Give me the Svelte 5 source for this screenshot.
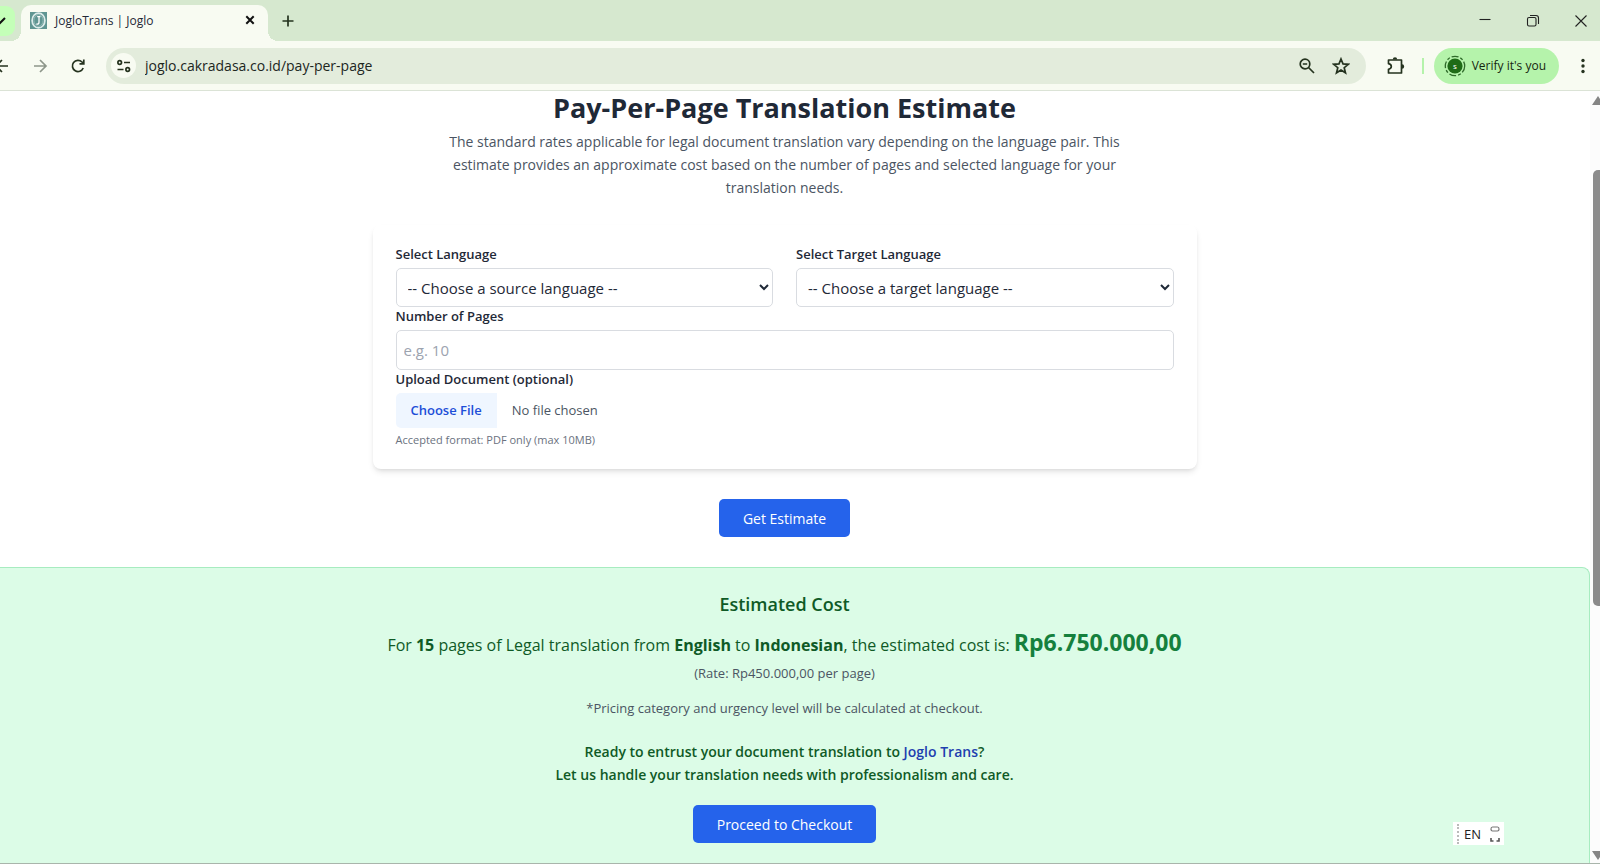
<script>
  const sourceLanguages = ["English", "Indonesian", "Dutch", "Japanese"]
  const targetLanguages = ["Indonesian", "English", "Dutch", "Japanese"]

  let url = "joglo.cakradasa.co.id/pay-per-page"
  let source = ""
  let target = ""
  let pages = ""

  const estimate = {
    pages: 15,
    from: "English",
    to: "Indonesian",
    total: "Rp6.750.000,00",
    rate: "Rp450.000,00",
  }
</script>

<div class="window">
  <header class="tabs">
    <button class="tab_search" aria-label="Search tabs">
      <svg width="20" height="20" viewBox="0 0 20 20">
        <path d="M0 9l4 4 5-5" transform="translate(-4 -1)" />
      </svg>
    </button>
    <div class="tab">
      <svg class="favicon" width="17" height="17" viewBox="0 0 17 17">
        <rect width="17" height="17" fill="#5f9592" />
        <ellipse cx="8.5" cy="8.5" rx="6.4" ry="7.4" fill="none" stroke="#dcebea" />
        <ellipse cx="8.5" cy="8.5" rx="4.6" ry="5.8" fill="none" stroke="#a9c9c6" stroke-width=".7" />
        <path d="M7.2 4.6h3.2M9 4.6v5.6q0 2-2 2l-.6-.5" fill="none" stroke="#fff" stroke-width="1.3" />
      </svg>
      <span class="tab_title">JogloTrans | Joglo</span>
      <button class="icon" aria-label="Close tab">
        <svg width="16" height="16" viewBox="0 0 16 16" class="bold">
          <path d="M4.3 4.3l7.4 7.4M11.7 4.3l-7.4 7.4" />
        </svg>
      </button>
    </div>
    <button class="icon new_tab" aria-label="New tab">
      <svg width="16" height="16" viewBox="0 0 16 16">
        <path d="M8 2.5v11M2.5 8h11" />
      </svg>
    </button>
    <div class="controls">
      <button class="icon" aria-label="Minimize">
        <svg width="16" height="16" viewBox="0 0 16 16" class="thin"><path d="M2.5 6.5h11" /></svg>
      </button>
      <button class="icon" aria-label="Restore">
        <svg width="16" height="16" viewBox="0 0 16 16" class="thin">
          <rect x="2.5" y="4.5" width="8.5" height="8.5" rx="1.5" />
          <path d="M5 2.5h6a2.5 2.5 0 0 1 2.5 2.5v6" />
        </svg>
      </button>
      <button class="icon" aria-label="Close window">
        <svg width="16" height="16" viewBox="0 0 16 16" class="thin"><path d="M2.5 2.5l11 11M13.5 2.5l-11 11" /></svg>
      </button>
    </div>
  </header>

  <div class="toolbar">
    <button class="icon back" aria-label="Back">
      <svg width="16" height="16" viewBox="0 0 16 16"><path d="M14 8H2M8 2L2 8l6 6" /></svg>
    </button>
    <button class="icon forward" aria-label="Forward">
      <svg width="16" height="16" viewBox="0 0 16 16"><path d="M2 8h12M8 2l6 6-6 6" /></svg>
    </button>
    <button class="icon reload" aria-label="Reload">
      <svg width="16" height="16" viewBox="0 0 16 16">
        <path d="M13.2 10A5.6 5.6 0 1 1 12 4l1.5 1.5M13.8 1.5v4.3H9.5" />
      </svg>
    </button>
    <div class="omnibox">
      <button class="site_info" aria-label="View site information">
        <svg width="16" height="16" viewBox="0 0 16 16">
          <circle cx="3.7" cy="4.5" r="1.8" />
          <path d="M8 4.5h6M1.5 11.5h6" />
          <circle cx="11.7" cy="11.5" r="1.8" />
        </svg>
      </button>
      <input class="url" type="text" aria-label="Address bar" bind:value={url} />
      <button class="icon" aria-label="Zoom">
        <svg width="18" height="18" viewBox="0 0 18 18">
          <circle cx="7" cy="7" r="4.8" />
          <path d="M10.5 10.5l5.5 5.5M4.8 7h4.4" />
        </svg>
      </button>
      <button class="icon" aria-label="Bookmark this tab">
        <svg width="18" height="18" viewBox="0 0 18 18">
          <path d="M9 2l2 4.9 5.2.4-4 3.4 1.3 5.1L9 13l-4.5 2.8 1.3-5.1-4-3.4L7 6.9z" />
        </svg>
      </button>
    </div>
    <button class="icon extensions" aria-label="Extensions">
      <svg width="20" height="20" viewBox="0 0 20 20">
        <path d="M2.5 4h13v13h-13v-3.7q2.8-.6 2.8-2.8t-2.8-2.8z" stroke-linejoin="round" />
        <path class="fill" d="M6.8 3.5a2.2 2.2 0 0 1 4.4 0zM16 8.3a2.2 2.2 0 0 1 0 4.4z" />
      </svg>
    </button>
    <span class="divider"></span>
    <button class="verify">
      <svg width="22" height="22" viewBox="0 0 22 22">
        <circle cx="11" cy="11" r="7.6" fill="#1f6b17" />
        <circle cx="11" cy="11" r="9.7" fill="none" stroke="#2f6a2a" stroke-width="1.3" stroke-dasharray="7 2 3 2" />
        <text x="11" y="14" text-anchor="middle">s</text>
      </svg>
      <span>Verify it's you</span>
    </button>
    <button class="icon menu" aria-label="Browser menu">
      <svg width="16" height="16" viewBox="0 0 16 16" class="fill">
        <circle cx="8" cy="2.5" r="1.7" /><circle cx="8" cy="8" r="1.7" /><circle cx="8" cy="13.5" r="1.7" />
      </svg>
    </button>
  </div>

  <div class="viewport">
    <main>
      <h1>Pay-Per-Page Translation Estimate</h1>
      <p class="intro">
        The standard rates applicable for legal document translation vary depending on the language pair. This
        estimate provides an approximate cost based on the number of pages and selected language for your
        translation needs.
      </p>

      <form id="estimate" class="card" on:submit|preventDefault>
        <div class="pair">
          <div class="field">
            <label for="source">Select Language</label>
            <select id="source" bind:value={source}>
              <option value="">-- Choose a source language --</option>
              {#each sourceLanguages as name}
                <option value={name}>{name}</option>
              {/each}
            </select>
          </div>
          <div class="field">
            <label for="target">Select Target Language</label>
            <select id="target" bind:value={target}>
              <option value="">-- Choose a target language --</option>
              {#each targetLanguages as name}
                <option value={name}>{name}</option>
              {/each}
            </select>
          </div>
        </div>
        <div class="field">
          <label for="pages">Number of Pages</label>
          <input id="pages" type="number" min="1" placeholder="e.g. 10" bind:value={pages} />
        </div>
        <div class="field">
          <label for="document">Upload Document (optional)</label>
          <input id="document" type="file" accept="application/pdf" />
          <small>Accepted format: PDF only (max 10MB)</small>
        </div>
      </form>

      <button class="primary" type="submit" form="estimate">Get Estimate</button>

      <section class="result">
        <h2>Estimated Cost</h2>
        <p class="summary">
          For <strong>{estimate.pages}</strong> pages of Legal translation from
          <strong>{estimate.from}</strong> to <strong>{estimate.to}</strong>, the estimated cost is:
          <span class="total">{estimate.total}</span>
        </p>
        <p class="rate">(Rate: {estimate.rate} per page)</p>
        <p class="note">*Pricing category and urgency level will be calculated at checkout.</p>
        <p class="pitch">
          Ready to entrust your document translation to <span class="brand">Joglo Trans</span>?<br />
          Let us handle your translation needs with professionalism and care.
        </p>
        <button class="primary" type="button">Proceed to Checkout</button>
      </section>
    </main>

    <div class="scrollbar">
      <span class="arrow up"></span>
      <span class="track"><span class="thumb"></span></span>
      <span class="arrow down"></span>
    </div>

    <div class="language_bar">
      <span class="grip"></span>
      <span>EN</span>
      <svg width="10" height="18" viewBox="0 0 10 18">
        <path d="M3.5 2h-1Q1 2 1 4t1.500 2h1M6.500 2h1Q9 2 9 4T7.500 6h-1M3 2h4M3 6h4" fill="none" stroke="#777" stroke-width="1.2" />
        <path d="M1 13v3h2.500M9 13v3H6.500" fill="none" stroke="#555" stroke-width="1.6" />
      </svg>
    </div>
  </div>
</div>

<style>
  :global(body) {
    margin: 0;
    background: #fff;
  }
  .window {
    display: flex;
    flex-direction: column;
    height: 100vh;
    overflow: hidden;
    font-family: "Segoe UI", "Open Sans", sans-serif;
    color: #1f2937;
  }
  button,
  input,
  select {
    font: inherit;
    color: inherit;
  }
  button {
    border: 0;
    padding: 0;
    background: none;
    cursor: pointer;
  }
  svg {
    display: block;
    fill: none;
    stroke: #25331f;
    stroke-width: 1.7;
    flex: none;
  }
  svg.bold {
    stroke: #111;
    stroke-width: 2;
  }
  svg.thin {
    stroke: #222;
    stroke-width: 1.1;
  }
  svg.fill,
  .fill {
    fill: #25331f;
    stroke: none;
  }

  /* tab strip */
  .tabs {
    display: flex;
    align-items: center;
    height: 41px;
    background: #d6e8cf;
  }
  .tab_search {
    width: 15px;
    height: 30px;
    border-radius: 0 9px 9px 0;
    background: #c4ffb8;
    overflow: hidden;
  }
  .tab_search svg {
    stroke: #111;
    stroke-width: 2;
  }
  .tab {
    position: relative;
    display: flex;
    align-items: center;
    align-self: flex-end;
    box-sizing: border-box;
    width: 247px;
    height: 36px;
    margin-left: 6px;
    padding: 0 10px 6px 9px;
    border-radius: 10px 10px 0 0;
    background: #f8fbf2;
  }
  .tab::before,
  .tab::after {
    content: "";
    position: absolute;
    bottom: 0;
    width: 10px;
    height: 10px;
  }
  .tab::before {
    right: 100%;
    background: radial-gradient(circle at 0 0, transparent 10px, #f8fbf2 10px);
  }
  .tab::after {
    left: 100%;
    background: radial-gradient(circle at 100% 0, transparent 10px, #f8fbf2 10px);
  }
  .favicon {
    stroke: none;
  }
  .tab_title {
    flex: 1;
    padding-left: 8px;
    font-size: 12px;
  }
  .new_tab {
    margin-left: 12px;
  }
  .controls {
    display: flex;
    gap: 32px;
    margin-left: auto;
    padding-right: 11px;
  }

  /* toolbar */
  .toolbar {
    display: flex;
    align-items: center;
    height: 49px;
    border-bottom: 1px solid #dbe3d6;
    background: #f8fbf2;
  }
  .back {
    margin-left: -6px;
  }
  .forward {
    margin-left: 22px;
  }
  .forward svg {
    stroke: #8d968a;
  }
  .reload {
    margin-left: 22px;
  }
  .omnibox {
    display: flex;
    align-items: center;
    flex: 1;
    gap: 16px;
    height: 36px;
    margin-left: 20px;
    padding: 0 16px 0 5px;
    border-radius: 18px;
    background: #e3ecdc;
  }
  .site_info {
    display: flex;
    align-items: center;
    justify-content: center;
    width: 25px;
    height: 25px;
    border-radius: 50%;
    background: #f8fbf2;
  }
  .url {
    flex: 1;
    min-width: 0;
    margin-left: -7px;
    padding: 0;
    border: 0;
    outline: 0;
    background: none;
    font-size: 14px;
    color: #20261e;
  }
  .extensions {
    margin-left: 20px;
  }
  .divider {
    width: 2px;
    height: 16px;
    margin: 0 10px 0 16px;
    background: #b5f3ab;
  }
  .verify {
    display: flex;
    align-items: center;
    gap: 6px;
    height: 36px;
    padding: 0 13px 0 10px;
    border-radius: 18px;
    background: #b5f3ab;
    font-size: 12px;
    color: #16260f;
  }
  .verify svg {
    stroke: none;
  }
  .verify text {
    fill: #fff;
    font-size: 8px;
  }
  .menu {
    margin: 0 9px 0 16px;
  }

  /* page */
  .viewport {
    position: relative;
    display: flex;
    flex: 1;
    min-height: 0;
    box-sizing: border-box;
    border-bottom: 1px solid #a9b5ab;
  }
  main {
    display: flex;
    flex: 1;
    flex-direction: column;
    align-items: center;
    margin-left: -21px;
    font-size: 14px;
    line-height: 23px;
  }
  h1,
  h2,
  p {
    margin: 0;
  }
  h1 {
    font-size: 27px;
    line-height: 34px;
  }
  .intro {
    max-width: 700px;
    margin-top: 5px;
    text-align: center;
    color: #4b5563;
  }
  .card {
    box-sizing: border-box;
    width: 824px;
    max-width: 100%;
    margin: 26px 0 30px;
    padding: 20px 23px 21px;
    border-radius: 8px;
    box-shadow: 0 4px 6px -1px rgba(0, 0, 0, 0.1), 0 2px 4px -2px rgba(0, 0, 0, 0.1);
  }
  .pair {
    display: grid;
    grid-template-columns: 1fr 1fr;
    gap: 23px;
  }
  .field {
    display: flex;
    flex-direction: column;
  }
  label {
    font-size: 13px;
    font-weight: 600;
    line-height: 19px;
    margin-bottom: 4px;
  }
  select,
  #pages {
    box-sizing: border-box;
    width: 100%;
    height: 39px;
    padding: 0 7px;
    border: 1px solid #d9dce1;
    border-radius: 5px;
    background: #fff;
    font-size: 15px;
  }
  #pages {
    height: 40px;
  }
  #pages::placeholder {
    color: #9ca3af;
  }
  #document {
    font-size: 13px;
    color: #4b5563;
  }
  #document::file-selector-button {
    height: 35px;
    margin-right: 15px;
    padding: 0 15px;
    border: 0;
    border-radius: 5px 0 0 5px;
    background: #eff6ff;
    font: inherit;
    font-weight: 600;
    color: #1d4ed8;
  }
  small {
    margin-top: 4px;
    font-size: 11px;
    line-height: 16px;
    color: #6b7280;
  }
  .primary {
    flex: none;
    height: 38px;
    padding: 0 24px;
    border-radius: 5px;
    background: #2563eb;
    color: #fff;
  }
  .result {
    display: flex;
    flex-direction: column;
    align-items: center;
    box-sizing: border-box;
    width: 100%;
    flex: 1;
    margin-top: 30px;
    padding: 23px 23px 0;
    border: 1px solid #a7ecc0;
    border-bottom: 0;
    border-radius: 8px 8px 0 0;
    background: #dcfce7;
    text-align: center;
    color: #0f5a26;
  }
  h2 {
    font-size: 18px;
    font-weight: 600;
    line-height: 27px;
  }
  .summary {
    margin-top: 8px;
    font-size: 16px;
    line-height: 32px;
  }
  .total {
    font-size: 23px;
    font-weight: 700;
    color: #15803d;
  }
  .rate,
  .note {
    font-size: 13px;
    line-height: 19px;
    color: #4b5563;
  }
  .rate {
    margin-top: 3px;
  }
  .note {
    margin-top: 16px;
  }
  .pitch {
    margin: 22px 0 19px;
    font-weight: 600;
  }
  .brand {
    color: #1e40af;
  }

  .scrollbar {
    display: flex;
    flex-direction: column;
    width: 10px;
    padding: 5px 0 3px;
    box-sizing: border-box;
    background: #fcfcfc;
    overflow: hidden;
  }
  .arrow {
    margin-left: 2px;
    width: 0;
    border: 6px solid transparent;
  }
  .up {
    border-top: 0;
    border-bottom: 9px solid #858585;
  }
  .down {
    border-bottom: 0;
    border-top: 9px solid #858585;
  }
  .track {
    flex: 1;
    padding-top: 65px;
  }
  .thumb {
    display: block;
    width: 14px;
    height: 64%;
    margin-left: 3px;
    border-radius: 5px;
    background: #8b8b8b;
  }

  .language_bar {
    position: absolute;
    right: 96px;
    bottom: 18px;
    display: flex;
    align-items: center;
    gap: 5px;
    height: 23px;
    padding: 0 4px;
    background: #fff;
    font-size: 13px;
    color: #222;
  }
  .language_bar svg {
    stroke: none;
    margin-left: 4px;
  }
  .grip {
    height: 20px;
    border-left: 2px dotted #bbb;
  }
</style>
